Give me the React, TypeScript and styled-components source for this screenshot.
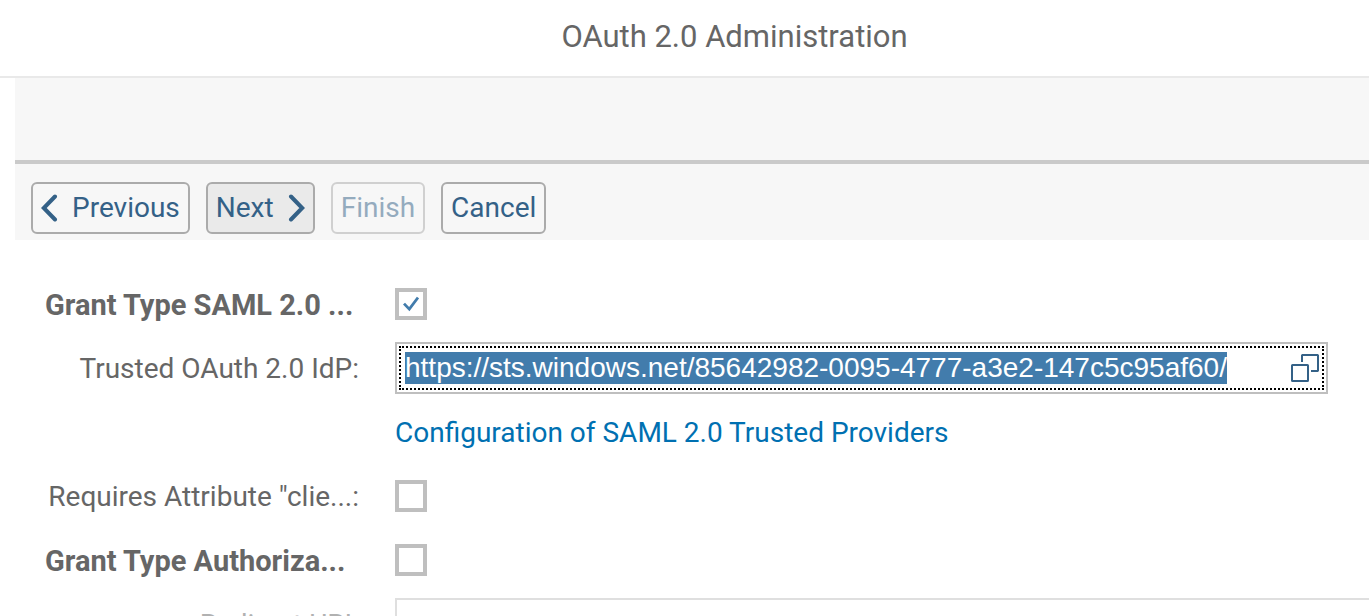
import React, { useEffect, useRef, useState } from 'react';
import styled, { createGlobalStyle } from 'styled-components';

const GlobalStyle = createGlobalStyle`
  *, *::before, *::after { box-sizing: border-box; }
  body {
    margin: 0;
    background: #fff;
    color: #666;
    font-family: Roboto, "Liberation Sans", sans-serif;
    font-size: 28px;
    line-height: 32px;
  }
`;

const Page = styled.div`
  height: 100vh;
  overflow: hidden;
`;

const Header = styled.header`
  display: flex;
  align-items: center;
  justify-content: center;
  height: 78px;
  padding: 0 0 2px 100px;
  border-bottom: 2px solid #e9e9e9;
`;

const Title = styled.h1`
  margin: 0;
  font-size: 31px;
  font-weight: 400;
  line-height: 40px;
`;

const Main = styled.main`
  margin-left: 15px;
`;

const RoadMap = styled.div`
  height: 86px;
  background: #f7f7f7;
  border-bottom: 4px solid #cacaca;
`;

const Toolbar = styled.div`
  display: flex;
  gap: 16px;
  padding: 18px 16px 6px;
  background: #f7f7f7;
`;

const ToolButton = styled.button<{ $emphasized?: boolean }>`
  display: flex;
  align-items: center;
  gap: 14px;
  height: 52px;
  padding: 0 8px;
  border: 2px solid #ababab;
  border-radius: 6px;
  background: ${(p) => (p.$emphasized ? '#eaeaea' : '#f7f7f7')};
  color: #346187;
  font: inherit;

  &:disabled {
    opacity: 0.5;
  }
`;

const Form = styled.form`
  padding: 32px 41px 0 30px;
`;

const Row = styled.div`
  display: flex;
  align-items: center;
  height: 64px;
`;

const Label = styled.label<{ $strong?: boolean; $dimmed?: boolean }>`
  flex: none;
  width: 314px;
  margin-right: 36px;
  padding-top: 2px;
  white-space: nowrap;
  text-align: ${(p) => (p.$strong ? 'left' : 'right')};
  font-size: ${(p) => (p.$strong ? 29 : 28)}px;
  font-weight: ${(p) => (p.$strong ? 700 : 400)};
  opacity: ${(p) => (p.$dimmed ? 0.5 : 1)};
`;

const LinkRow = styled(Row)`
  padding: 2px 0 0 350px;
`;

const Link = styled.a`
  color: #0070b1;
  text-decoration: none;
  white-space: nowrap;
`;

const CheckFrame = styled.span`
  display: grid;
  width: 32px;
  height: 32px;

  > * { grid-area: 1 / 1; place-self: center; }
  > svg { pointer-events: none; }
`;

const CheckInput = styled.input`
  appearance: none;
  width: 32px;
  height: 32px;
  margin: 0;
  border: 4px solid #bfbfbf;
  background: #fff;
  outline: none;
`;

const Field = styled.div`
  flex: 1;
  min-width: 0;
  height: 52px;
  padding: 2px;
  border: 2px solid #bfbfbf;
  background: #fff;
`;

const FieldFocus = styled.div`
  display: flex;
  align-items: center;
  height: 100%;
  padding: 0 3px 0 4px;
  border: 2px dotted #000;
`;

const TextInput = styled.input`
  flex: 1;
  min-width: 0;
  height: 32px;
  padding: 0;
  border: 0;
  outline: none;
  background: transparent;
  color: #333;
  font: inherit;
  font-family: "Liberation Sans", Arial, sans-serif;

  &::selection {
    background: #427cac;
    color: #fff;
  }
`;

const HelpButton = styled.button`
  display: flex;
  padding: 0;
  border: 0;
  background: none;
  color: #346187;
`;

const WideField = styled.input`
  flex: 1;
  min-width: 0;
  height: 52px;
  margin-right: -61px;
  padding: 0 8px;
  border: 2px solid #dfdfdf;
  background: #fff;
  font: inherit;
`;

const ChevronLeft = () => (
  <svg width="17" height="28" viewBox="0 0 17 28" fill="none" stroke="currentColor" strokeWidth="4" strokeLinecap="round" strokeLinejoin="miter" aria-hidden="true">
    <path d="M14 2.5 2.8 14 14 25.5" />
  </svg>
);

const ChevronRight = () => (
  <svg width="17" height="28" viewBox="0 0 17 28" fill="none" stroke="currentColor" strokeWidth="4" strokeLinecap="round" strokeLinejoin="miter" aria-hidden="true">
    <path d="M3 2.5 14.2 14 3 25.5" />
  </svg>
);

const ValueHelpIcon = () => (
  <svg width="28" height="28" viewBox="0 0 28 28" fill="none" stroke="currentColor" strokeWidth="2" aria-hidden="true">
    <rect x="1" y="11" width="16" height="16" rx="0.5" />
    <path d="M11 8V1.5L11.5 1H26.5L27 1.5V16.5L26.5 17H20" />
  </svg>
);

const CheckBox = ({ id, initial = false }: { id: string; initial?: boolean }) => {
  const [checked, setChecked] = useState(initial);
  return (
    <CheckFrame>
      <CheckInput id={id} type="checkbox" checked={checked} onChange={(e) => setChecked(e.target.checked)} />
      {checked && (
        <svg width="16" height="16" viewBox="0 0 16 16" fill="none" stroke="#427cac" strokeWidth="2.8" aria-hidden="true">
          <path d="M1 7.6 6.3 13.2 15 1.6" />
        </svg>
      )}
    </CheckFrame>
  );
};

export default function App() {
  const idp = useRef<HTMLInputElement>(null);
  useEffect(() => {
    idp.current?.focus();
    idp.current?.select();
  }, []);

  return (
    <Page>
      <GlobalStyle />
      <Header>
        <Title>OAuth 2.0 Administration</Title>
      </Header>
      <Main>
        <RoadMap />
        <Toolbar>
          <ToolButton type="button"><ChevronLeft />Previous</ToolButton>
          <ToolButton type="button" $emphasized>Next<ChevronRight /></ToolButton>
          <ToolButton type="button" disabled>Finish</ToolButton>
          <ToolButton type="button">Cancel</ToolButton>
        </Toolbar>
        <Form onSubmit={(e) => e.preventDefault()}>
          <Row>
            <Label htmlFor="saml" $strong>Grant Type SAML 2.0 ...</Label>
            <CheckBox id="saml" initial />
          </Row>
          <Row>
            <Label htmlFor="idp">Trusted OAuth 2.0 IdP:</Label>
            <Field>
              <FieldFocus>
                <TextInput ref={idp} id="idp" type="text" spellCheck={false} defaultValue="https://sts.windows.net/85642982-0095-4777-a3e2-147c5c95af60/" />
                <HelpButton type="button" aria-label="Open value help"><ValueHelpIcon /></HelpButton>
              </FieldFocus>
            </Field>
          </Row>
          <LinkRow>
            <Link href="#providers">Configuration of SAML 2.0 Trusted Providers</Link>
          </LinkRow>
          <Row>
            <Label htmlFor="attribute">Requires Attribute "clie...:</Label>
            <CheckBox id="attribute" />
          </Row>
          <Row>
            <Label htmlFor="authorization" $strong>Grant Type Authoriza...</Label>
            <CheckBox id="authorization" />
          </Row>
          <Row>
            <Label htmlFor="redirect" $dimmed>Redirect URI:</Label>
            <WideField id="redirect" type="text" disabled />
          </Row>
        </Form>
      </Main>
    </Page>
  );
}
